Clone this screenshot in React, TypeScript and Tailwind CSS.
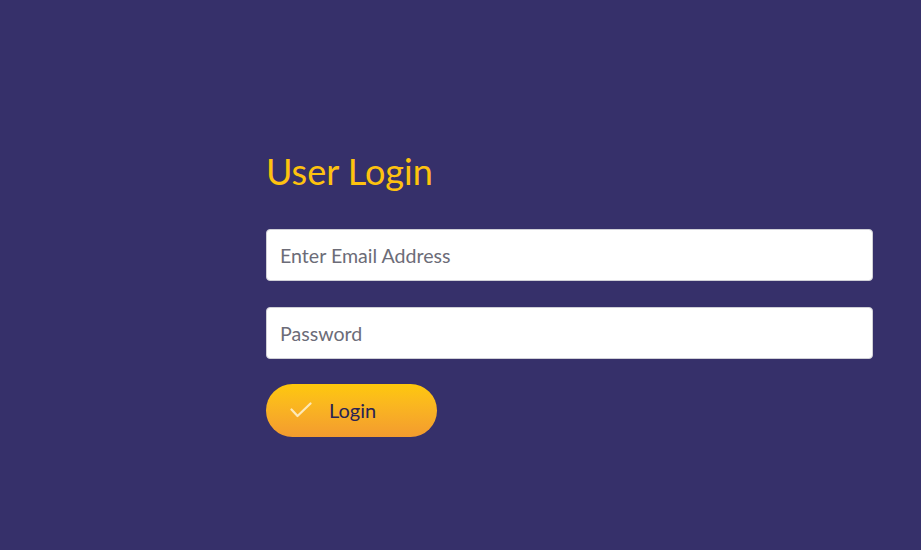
export default function App() {
  return (
    <div
      className="min-h-[550px] bg-[#36306a] pl-[266px] pr-[48px] pt-[150px]"
      style={{ fontFamily: 'Lato, "Noto Sans", sans-serif' }}
    >
      <h1 className="text-[36px] leading-[1.2] text-[#fec20f]">User Login</h1>

      <form className="mt-[36px] flex flex-col" onSubmit={(e) => e.preventDefault()}>
        <input
          type="email"
          placeholder="Enter Email Address"
          className="h-[52px] w-full rounded-[4px] border border-[#cfcfd6] bg-white px-[13px] text-[19.6px] text-[#333] placeholder:text-[#6c6c78] outline-none"
        />
        <input
          type="password"
          placeholder="Password"
          className="mt-[26px] h-[52px] w-full rounded-[4px] border border-[#cfcfd6] bg-white px-[13px] text-[19.6px] text-[#333] placeholder:text-[#6c6c78] outline-none"
        />

        <button
          type="submit"
          className="mt-[25px] flex h-[53px] w-[171px] items-center rounded-full bg-gradient-to-b from-[#fec80a] to-[#f39b2e] pb-[2px] pl-[24px] text-[20px] text-[#2a2354]"
        >
          <svg width="22" height="16" viewBox="0 0 22 16" fill="none" className="mr-[17px]">
            <path d="M1.5 7.5 L7.5 14 L20.5 1.5" stroke="#fde9b8" strokeWidth="2.2" strokeLinecap="round" strokeLinejoin="round" />
          </svg>
          Login
        </button>
      </form>
    </div>
  );
}
